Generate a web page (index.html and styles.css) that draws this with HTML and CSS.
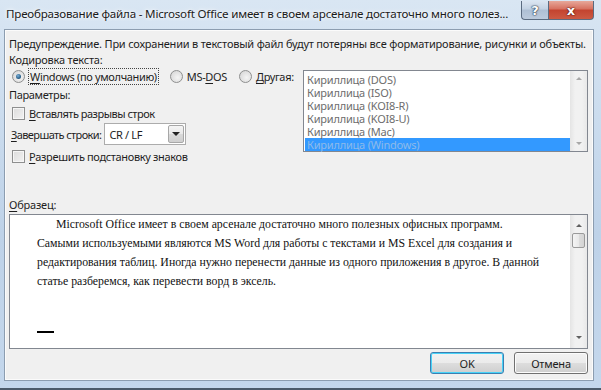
FILE: index.html
```html
<!DOCTYPE html>
<html lang="ru">
<head>
  <meta charset="UTF-8" />
  <title>Преобразование файла</title>
  <link rel="stylesheet" href="styles.css">
</head>
<body>
  <div class="window">
    <div class="titlebar">
      <span class="title">Преобразование файла - Microsoft Office имеет в своем арсенале достаточно много полез...</span>
      <div class="caption-btns">
        <div class="cap-btn help">?</div>
        <div class="cap-btn close">x</div>
      </div>
    </div>
    <div class="client">
      <div class="warn">Предупреждение. При сохранении в текстовый файл будут потеряны все форматирование, рисунки и объекты.</div>
      <div class="label">Кодировка текста:</div>
      <div class="enc-row">
        <div class="enc-left">
          <div class="radios">
            <span class="radio-item"><span class="radio checked"></span><span class="focus"><u>W</u>indows (по умолчанию)</span></span>
            <span class="radio-item"><span class="radio"></span>MS-<u>D</u>OS</span>
            <span class="radio-item"><span class="radio"></span><u>Д</u>ругая:</span>
          </div>
          <div class="label params">Параметры:</div>
          <div class="check-row tight"><span class="check"></span><u>В</u>ставлять разрывы строк</div>
          <div class="combo-row">
            <span class="combo-label"><u>З</u>авершать строки:</span>
            <div class="combo">
              <span class="combo-text">CR / LF</span>
              <span class="combo-btn"><span class="tri"></span></span>
            </div>
          </div>
          <div class="check-row"><span class="check"></span><u>Р</u>азрешить подстановку знаков</div>
        </div>
        <div class="listbox">
          <div class="list-items">
            <div class="item">Кириллица (DOS)</div>
            <div class="item">Кириллица (ISO)</div>
            <div class="item">Кириллица (KOI8-R)</div>
            <div class="item">Кириллица (KOI8-U)</div>
            <div class="item">Кириллица (Mac)</div>
            <div class="item selected">Кириллица (Windows)</div>
          </div>
          <div class="vscroll disabled">
            <span class="arrow up"></span>
            <span class="arrow down"></span>
          </div>
        </div>
      </div>
      <div class="label sample-label"><u>О</u>бразец:</div>
      <div class="sample">
        <div class="sample-text">
          <p class="first">Microsoft Office имеет в своем арсенале достаточно много полезных офисных программ.</p>
          <p>Самыми используемыми являются MS Word для работы с текстами и MS Excel для создания и<br>редактирования таблиц. Иногда нужно перенести данные из одного приложения в другое. В данной<br>статье разберемся, как перевести ворд в эксель.</p>
          <div class="para-mark"></div>
        </div>
        <div class="vscroll">
          <span class="arrow up"></span>
          <span class="thumb"></span>
          <span class="arrow down"></span>
        </div>
      </div>
      <div class="buttons">
        <div class="btn default">OK</div>
        <div class="btn">Отмена</div>
      </div>
    </div>
  </div>
</body>
</html>
```

FILE: styles.css
```css
body {
  margin: 0;
  padding: 0;
  font-family: 'Noto Sans', 'Open Sans', Arial, sans-serif;
  font-size: 11px;
  letter-spacing: -0.2px;
  color: #1e1e1e;
  background: #b9cde3;
}
u {
  text-decoration: underline;
  text-underline-offset: 2px;
}
.window {
  width: 601px;
  height: 390px;
  box-sizing: border-box;
  padding: 0 7px 7px 4px;
  display: flex;
  flex-direction: column;
  background: linear-gradient(180deg, #d9e6f3 0%, #cbdcee 30%, #bed2e8 60%, #c4d7ec 100%);
  border-bottom: 2px solid #4c5b6b;
}
.titlebar {
  height: 29px;
  display: flex;
  align-items: flex-start;
  flex-shrink: 0;
}
.title {
  flex: 1;
  overflow: hidden;
  font-size: 11.6px;
  color: #1b1b1b;
  padding: 6px 0 0 2px;
  white-space: nowrap;
  text-shadow: 0 0 6px #fff, 0 0 3px #fff;
}
.caption-btns {
  display: flex;
  padding-top: 1px;
  flex-shrink: 0;
}
.cap-btn {
  height: 18px;
  border: 1px solid #5a6b80;
  border-top: 0;
  display: flex;
  align-items: center;
  justify-content: center;
  font-weight: 700;
  color: #fff;
  font-family: 'DejaVu Sans', sans-serif;
  letter-spacing: 0;
}
.help {
  width: 26px;
  border-radius: 0 0 0 4px;
  border-right: 0;
  background: linear-gradient(180deg, #dbe5f1 0%, #c3d2e3 45%, #aebfd4 50%, #bccbdd 100%);
  font-size: 13px;
  text-shadow: 0 0 1px #2a3b50, 0 0 1px #2a3b50, 0 0 2px #2a3b50;
}
.close {
  width: 44px;
  border-radius: 0 0 4px 0;
  background: linear-gradient(180deg, #e7a89a 0%, #d6705f 45%, #c3432f 50%, #cc5a43 100%);
  font-size: 13px;
  text-shadow: 0 0 1px #5a1a10, 0 0 1px #5a1a10, 0 0 2px #5a1a10;
}
.client {
  flex: 1;
  min-height: 0;
  background: #f0f0f0;
  border: 1px solid #8c9db0;
  box-shadow: inset 0 0 0 1px #fbfbfb;
  padding: 0 5px 0 4px;
  display: flex;
  flex-direction: column;
}
.warn {
  margin-top: 6px;
  height: 16px;
  line-height: 16px;
  white-space: nowrap;
}
.label {
  height: 15px;
  line-height: 15px;
  white-space: nowrap;
}
.enc-row {
  display: flex;
  justify-content: space-between;
  margin-top: 3px;
}
.enc-left {
  display: flex;
  flex-direction: column;
  min-width: 0;
  letter-spacing: -0.35px;
}
.radios {
  display: flex;
  height: 12px;
  align-items: center;
  padding-left: 3px;
  white-space: nowrap;
}
.radio-item {
  display: flex;
  align-items: center;
  margin-right: 12px;
}
.radio {
  width: 11px;
  height: 11px;
  border-radius: 50%;
  border: 1px solid #8e8f8f;
  background: radial-gradient(circle at 60% 60%, #f4f4f4 0%, #dcdcdc 70%, #cfcfcf 100%);
  margin-right: 4px;
  display: flex;
  align-items: center;
  justify-content: center;
}
.radio.checked::after {
  content: '';
  width: 5px;
  height: 5px;
  border-radius: 50%;
  background: radial-gradient(circle at 40% 35%, #7ab0d8 0%, #2c628c 60%, #1d4466 100%);
}
.focus {
  outline: 1px dotted #444;
  outline-offset: 0;
  padding: 0 1px;
}
.params {
  margin-top: 5px;
}
.check-row {
  display: flex;
  align-items: center;
  height: 18px;
  margin-top: 2px;
  padding-left: 3px;
  white-space: nowrap;
}
.check-row.tight {
  letter-spacing: -0.5px;
}
.check {
  width: 11px;
  height: 11px;
  border: 1px solid #8e8f8f;
  background: linear-gradient(135deg, #dcdcdc 0%, #f2f2f2 100%);
  box-shadow: inset 0 0 0 1px #f6f6f6;
  margin-right: 4px;
}
.combo-row {
  display: flex;
  align-items: center;
  margin-top: 1px;
  padding-left: 2px;
  white-space: nowrap;
}
.combo-label {
  letter-spacing: -0.6px;
}
.combo {
  width: 80px;
  height: 20px;
  margin-left: 3px;
  border: 1px solid #acacac;
  background: #fff;
  display: flex;
  align-items: center;
  justify-content: space-between;
}
.combo-text {
  padding-left: 4px;
}
.combo-btn {
  width: 16px;
  height: 18px;
  margin-right: 1px;
  border: 1px solid #a7a7a7;
  box-sizing: border-box;
  border-radius: 2px;
  background: linear-gradient(180deg, #f5f5f5 0%, #e8e8e8 50%, #d9d9d9 51%, #cfcfcf 100%);
  display: flex;
  align-items: center;
  justify-content: center;
}
.tri {
  border-left: 4px solid transparent;
  border-right: 4px solid transparent;
  border-top: 4px solid #222;
}
.listbox {
  flex-shrink: 0;
  width: 283px;
  height: 80px;
  border: 1px solid #828790;
  background: #fff;
  display: flex;
  justify-content: space-between;
}
.list-items {
  padding-top: 2px;
  flex: 1;
}
.item {
  height: 13px;
  line-height: 13px;
  padding-left: 2px;
  margin-left: 1px;
  color: #6d6d6d;
}
.item.selected {
  background: #3399ff;
  color: #8db9ea;
}
.vscroll {
  width: 17px;
  flex-shrink: 0;
  background: linear-gradient(90deg, #e4e4e4 0%, #f1f1f1 30%, #f1f1f1 70%, #e8e8e8 100%);
  display: flex;
  flex-direction: column;
  align-items: center;
  justify-content: space-between;
  padding: 6px 0;
  box-sizing: border-box;
}
.arrow {
  border-left: 3px solid transparent;
  border-right: 3px solid transparent;
}
.arrow.up {
  border-bottom: 3px solid #606060;
}
.arrow.down {
  border-top: 3px solid #606060;
}
.vscroll.disabled .arrow.up {
  border-bottom-color: #a8a8a8;
}
.vscroll.disabled .arrow.down {
  border-top-color: #a8a8a8;
}
.sample-label {
  margin-top: 33px;
  height: 13px;
  line-height: 13px;
}
.sample {
  height: 133px;
  flex-shrink: 0;
  margin-top: 3px;
  border: 1px solid #828790;
  background: #fff;
  display: flex;
  justify-content: space-between;
}
.sample-text {
  flex: 1;
  padding: 0 0 0 27px;
  font-family: 'Liberation Serif', 'Times New Roman', serif;
  font-size: 11.8px;
  letter-spacing: 0;
  line-height: 19px;
  color: #111;
  white-space: nowrap;
}
.sample-text p {
  margin: 0;
}
.sample-text .first {
  text-indent: 19px;
}
.para-mark {
  width: 17px;
  height: 2px;
  background: #000;
  margin-top: 40px;
}
.sample .vscroll {
  padding: 9px 0 9px;
}
.thumb {
  width: 13px;
  height: 15px;
  margin-top: 6px;
  margin-bottom: auto;
  border: 1px solid #9a9a9a;
  border-radius: 2px;
  box-sizing: border-box;
  background: linear-gradient(90deg, #f4f4f4 0%, #e9e9e9 50%, #dcdcdc 51%, #d4d4d4 100%);
}
.buttons {
  display: flex;
  justify-content: flex-end;
  gap: 10px;
  margin-top: 3px;
}
.btn {
  width: 72px;
  height: 20px;
  border: 1px solid #707070;
  border-radius: 3px;
  background: linear-gradient(180deg, #f2f2f2 0%, #ebebeb 50%, #dddddd 51%, #cfcfcf 100%);
  box-shadow: inset 0 0 0 1px #fcfcfc;
  display: flex;
  align-items: center;
  justify-content: center;
  color: #1e1e1e;
}
.btn.default {
  border-color: #3c7fb1;
  box-shadow: inset 0 0 0 1px #48d3f8;
}
```
